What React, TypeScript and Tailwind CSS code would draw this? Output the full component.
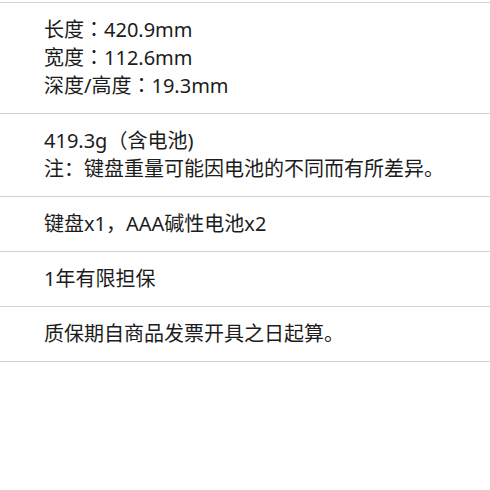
const rows: string[][] = [
  ["长度：420.9mm", "宽度：112.6mm", "深度/高度：19.3mm"],
  ["419.3g（含电池)", "注：键盘重量可能因电池的不同而有所差异。"],
  ["键盘x1，AAA碱性电池x2"],
  ["1年有限担保"],
  ["质保期自商品发票开具之日起算。"],
];

// 尺寸行的冒号居中显示（繁体字形），其余保持简体
function Line({ text, centerColon }: { text: string; centerColon: boolean }) {
  if (!centerColon) return <p className="text-[20px] leading-[28px]">{text}</p>;
  const parts = text.split("：");
  return (
    <p className="text-[20px] leading-[28px]">
      {parts.map((p, i) => (
        <span key={i}>
          {i > 0 && <span className="font-['Noto_Sans_CJK_TC',sans-serif] leading-none">：</span>}
          {p}
        </span>
      ))}
    </p>
  );
}

export default function App() {
  return (
    <div className="min-h-[490px] bg-white pt-[2px] font-['Noto_Sans','Noto_Sans_CJK_SC',sans-serif] text-[#1c1c1c]">
      <div className="border-b border-[#d2d2d2]">
        {rows.map((lines, i) => (
          <div key={i} className="border-t border-[#d2d2d2] py-[13px] pl-[44px]">
            {lines.map((t) => (
              <Line key={t} text={t} centerColon={i === 0} />
            ))}
          </div>
        ))}
      </div>
    </div>
  );
}
